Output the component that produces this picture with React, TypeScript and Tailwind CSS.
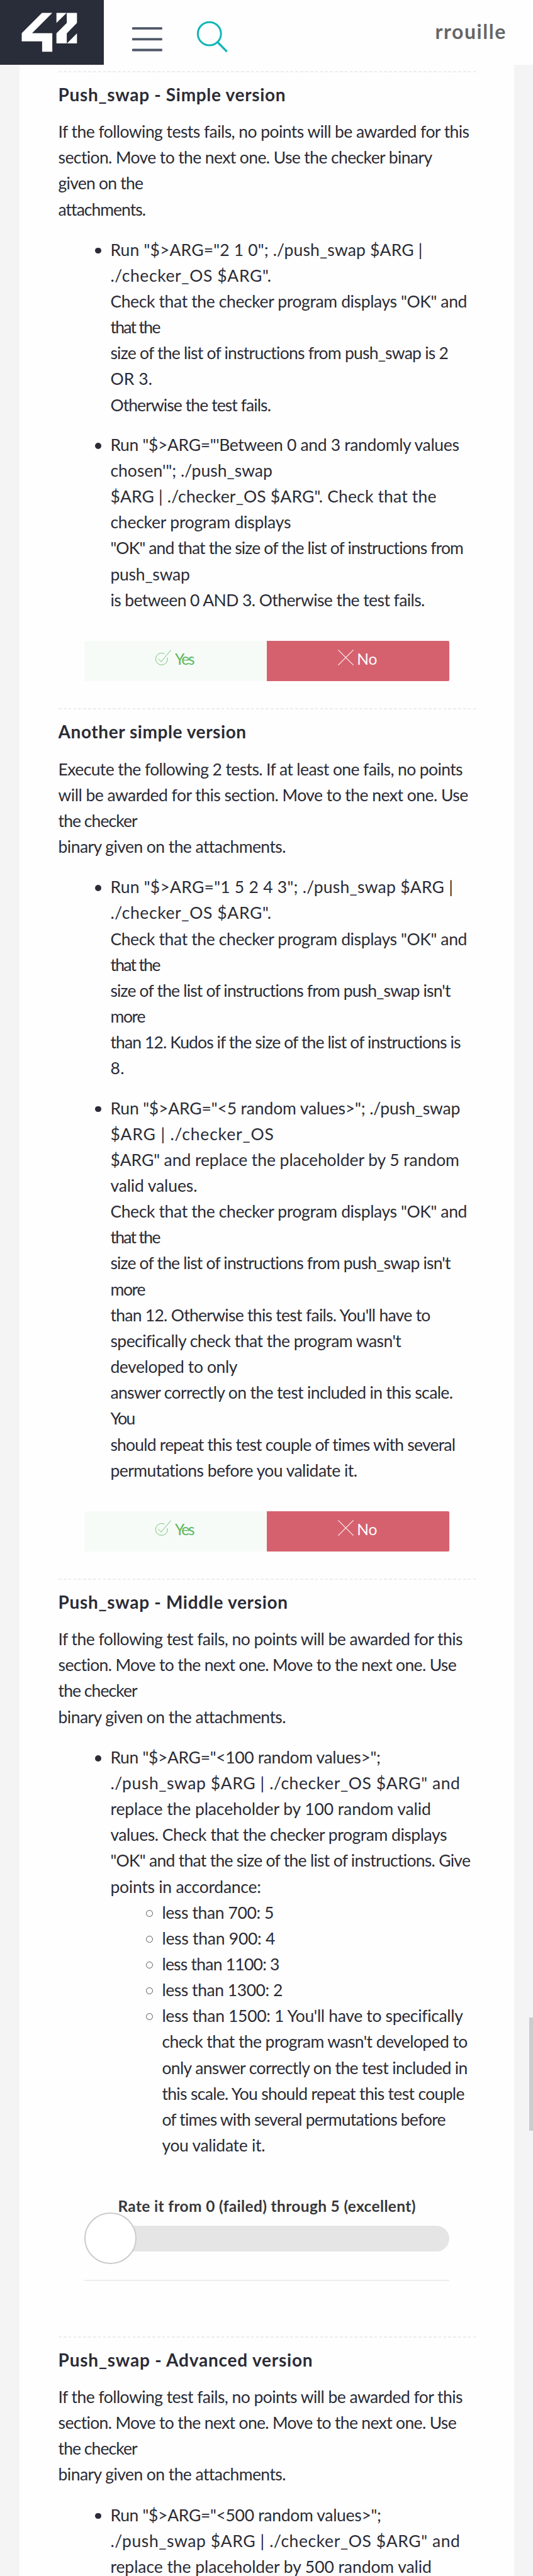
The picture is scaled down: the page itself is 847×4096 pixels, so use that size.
import { useLayoutEffect, useRef, useState } from "react";

type Row = [text: string, width: number];

/** One line of copy, tracked so that it spans the given measure. */
function Line({ row, className = "" }: { row: Row; className?: string }) {
  const [text, width] = row;
  const ref = useRef<HTMLSpanElement>(null);
  const [spacing, setSpacing] = useState(0);
  useLayoutEffect(() => {
    const el = ref.current;
    if (!el) return;
    el.style.letterSpacing = "0px";
    const natural = el.getBoundingClientRect().width;
    const next = (width - natural) / Math.max(text.length - 1, 1);
    el.style.letterSpacing = `${next}px`;
    setSpacing(next);
  }, [text, width]);
  return (
    <span className={`block whitespace-nowrap ${className}`}>
      <span ref={ref} style={{ letterSpacing: `${spacing}px` }}>
        {text}
      </span>
    </span>
  );
}

function Lines({ rows }: { rows: Row[] }) {
  return (
    <>
      {rows.map((row, i) => (
        <Line key={i} row={row} />
      ))}
    </>
  );
}

function Item({ rows, children }: { rows: Row[]; children?: React.ReactNode }) {
  return (
    <li className="flex">
      <span className="mt-[17px] mr-[14.5px] ml-[58.5px] size-[9.8px] shrink-0 rounded-full bg-[#2b2c36]" />
      <div>
        <Lines rows={rows} />
        {children}
      </div>
    </li>
  );
}

function SubItem({ rows }: { rows: Row[] }) {
  return (
    <li className="flex">
      <span className="mt-[16px] mr-[14px] ml-[57px] size-[11px] shrink-0 rounded-full border border-[#55565e]" />
      <div>
        <Lines rows={rows} />
      </div>
    </li>
  );
}

function Answer() {
  return (
    <div className="mt-[44px] ml-[41.5px] flex h-[64.3px] w-[580px] text-[24.5px] leading-[30px]">
      <div className="flex flex-1 bg-[#f6fbf8] pt-[13px] pl-[113px] text-[#5cb85c]">
        <svg viewBox="0 0 32 32" className="mt-[1px] mr-[6px] h-[25px] w-[25px]" fill="none" stroke="currentColor" strokeWidth="1.1">
          <path d="M18.5 8.6A12 12 0 1 0 24.3 16.5" />
          <path d="M5.5 18.2L11.8 24.4L31.6 .6" />
        </svg>
        <Line row={["Yes", 31.5]} className="mt-[1px]" />
      </div>
      <div className="flex flex-1 rounded-r-[2px] bg-[#d6616e] pt-[13px] pl-[113.5px] text-white">
        <svg viewBox="0 0 32 32" className="mt-[1px] mr-[5px] h-[25px] w-[25px]" fill="none" stroke="currentColor" strokeWidth="1.3">
          <path d="M.5 .5L31.5 31.5M31.5 .5L.5 31.5" />
        </svg>
        <Line row={["No", 32]} className="mt-[1px]" />
      </div>
    </div>
  );
}

function Slider() {
  return (
    <div className="mt-[61px] ml-[41.5px] w-[580px]">
      <div className="flex justify-center text-[24.5px] leading-[30px] font-bold text-[#37373a]">
        <Line row={["Rate it from 0 (failed) through 5 (excellent)", 473]} />
      </div>
      <div className="relative mt-[15.3px] h-[41px] rounded-full bg-[#e5e5e5]">
        <div className="absolute top-[-21px] left-0 size-[82.5px] rounded-full border-2 border-[#cccccc] bg-white" />
      </div>
      <div className="mt-[45.5px] h-[2px] bg-[#eeeeee]" />
    </div>
  );
}

function Section({ title, intro, height, children }: { title: Row; intro: Row[]; height: string; children: React.ReactNode }) {
  return (
    <section className={`${height} shrink-0 overflow-hidden`}>
      <div className="h-[2px] bg-[repeating-linear-gradient(90deg,#ececec_0px,#ececec_4.7px,#fefefe_4.7px,#fefefe_7.84px)]" />
      <h4 className="pt-[15px] text-[28px] font-bold">
        <Line row={title} />
      </h4>
      <div className="pt-[18px]">
        <Lines rows={intro} />
      </div>
      <ul className="flex flex-col gap-[22px] pt-[23px]">{children}</ul>
    </section>
  );
}

const checkerIntro: Row[] = [
  ["If the following test fails, no points will be awarded for this", 643],
  ["section. Move to the next one. Move to the next one. Use", 633.5],
  ["the checker", 126],
  ["binary given on the attachments.", 361],
];

function Header() {
  return (
    <header className="flex h-[102.7px] bg-[#fefefe]">
      <div className="w-[164.7px] bg-[#292d39]">
        <svg viewBox="0 0 630 393" className="block h-[102.7px] w-[164.7px]" fill="#fff">
          <path d="M255 78H318L195 202H318V315H256V252H132V202Z" />
          <path d="M343 78H405L343 140Z" />
          <path d="M406 78H468V140L406 203V264H343V203L406 140Z" />
          <path d="M468 203V264H407Z" />
        </svg>
      </div>
      <svg viewBox="804 165 183 148" className="mt-[43.1px] ml-[45.4px] h-[38.7px] w-[47.8px]" fill="#4f5767">
        <rect x="804" y="166" width="183" height="14.5" rx="2" />
        <rect x="804" y="231.5" width="183" height="14.5" rx="2" />
        <rect x="804" y="297.5" width="183" height="14.5" rx="2" />
      </svg>
      <svg viewBox="1196 126 192 194" className="mt-[33px] ml-[54.6px] h-[50.7px] w-[50.2px]" fill="none" stroke="#12b6b7">
        <circle cx="1275.5" cy="205" r="70.5" strokeWidth="11.5" />
        <path d="M1327 258L1382 314" strokeWidth="13" />
      </svg>
      <div className="mt-[29.5px] mr-[42px] ml-auto text-[32px] leading-[40px] font-bold text-[#666666]">
        <Line row={["rrouille", 112]} />
      </div>
    </header>
  );
}

export default function App() {
  return (
    <div className="relative h-[4096px] w-[847px] overflow-hidden bg-[#f4f4f4] font-[Lato,sans-serif] text-[26.5px] leading-[41.16px] text-[#2b2c36]">
      <Header />
      <main className="ml-[30.6px] flex h-[3993.3px] w-[786.8px] flex-col overflow-hidden bg-[#fefefe] pt-[10.2px] pr-[61.7px] pl-[62px]">
        <Section
          height="h-[1013.6px]"
          title={["Push_swap - Simple version", 361]}
          intro={[
            ["If the following tests fails, no points will be awarded for this", 653.5],
            ["section. Move to the next one. Use the checker binary", 595],
            ["given on the", 135.5],
            ["attachments.", 138.5],
          ]}
        >
          <Item
            rows={[
              ['Run "$>ARG="2 1 0"; ./push_swap $ARG |', 496],
              ['./checker_OS $ARG".', 255.5],
              ['Check that the checker program displays "OK" and', 567],
              ["that the", 80],
              ["size of the list of instructions from push_swap is 2", 538],
              ["OR 3.", 66.5],
              ["Otherwise the test fails.", 255.5],
            ]}
          />
          <Item
            rows={[
              ["Run \"$>ARG=\"'Between 0 and 3 randomly values", 554.5],
              ["chosen'\"; ./push_swap", 257.5],
              ['$ARG | ./checker_OS $ARG". Check that the', 518],
              ["checker program displays", 287],
              ['"OK" and that the size of the list of instructions from', 562],
              ["push_swap", 126.5],
              ["is between 0 AND 3. Otherwise the test fails.", 500],
            ]}
          />
          <li className="mt-[-22px]">
            <Answer />
          </li>
        </Section>
        <Section
          height="h-[1383.5px]"
          title={["Another simple version", 298.5]}
          intro={[
            ["Execute the following 2 tests. If at least one fails, no points", 643],
            ["will be awarded for this section. Move to the next one. Use", 652],
            ["the checker", 126],
            ["binary given on the attachments.", 361],
          ]}
        >
          <Item
            rows={[
              ['Run "$>ARG="1 5 2 4 3"; ./push_swap $ARG |', 544.5],
              ['./checker_OS $ARG".', 255.5],
              ['Check that the checker program displays "OK" and', 567],
              ["that the", 80],
              ["size of the list of instructions from push_swap isn't", 541.5],
              ["more", 56],
              ["than 12. Kudos if the size of the list of instructions is", 557.5],
              ["8.", 22],
            ]}
          />
          <Item
            rows={[
              ['Run "$>ARG="<5 random values>"; ./push_swap', 556],
              ["$ARG | ./checker_OS", 259.5],
              ['$ARG" and replace the placeholder by 5 random', 554.5],
              ["valid values.", 138],
              ['Check that the checker program displays "OK" and', 567],
              ["that the", 80],
              ["size of the list of instructions from push_swap isn't", 541.5],
              ["more", 56],
              ["than 12. Otherwise this test fails. You'll have to", 509],
              ["specifically check that the program wasn't", 462],
              ["developed to only", 202],
              ["answer correctly on the test included in this scale.", 544.5],
              ["You", 40],
              ["should repeat this test couple of times with several", 549],
              ["permutations before you validate it.", 393],
            ]}
          />
          <li className="mt-[-22px]">
            <Answer />
          </li>
        </Section>
        <Section height="h-[1204.9px]" title={["Push_swap - Middle version", 364.5]} intro={checkerIntro}>
          <Item
            rows={[
              ['Run "$>ARG="<100 random values>";', 429.5],
              ['./push_swap $ARG | ./checker_OS $ARG" and', 555.5],
              ["replace the placeholder by 100 random valid", 509.5],
              ["values. Check that the checker program displays", 535],
              ['"OK" and that the size of the list of instructions. Give', 573],
              ["points in accordance:", 239.5],
            ]}
          >
            <ul>
              <SubItem rows={[["less than 700: 5", 178]]} />
              <SubItem rows={[["less than 900: 4", 180]]} />
              <SubItem rows={[["less than 1100: 3", 187]]} />
              <SubItem rows={[["less than 1300: 2", 192]]} />
              <SubItem
                rows={[
                  ["less than 1500: 1 You'll have to specifically", 478],
                  ["check that the program wasn't developed to", 486],
                  ["only answer correctly on the test included in", 486],
                  ["this scale. You should repeat this test couple", 481],
                  ["of times with several permutations before", 452],
                  ["you validate it.", 164],
                ]}
              />
            </ul>
          </Item>
          <li className="mt-[-22px]">
            <Slider />
          </li>
        </Section>
        <Section height="h-[381px]" title={["Push_swap - Advanced version", 404]} intro={checkerIntro}>
          <Item
            rows={[
              ['Run "$>ARG="<500 random values>";', 430.5],
              ['./push_swap $ARG | ./checker_OS $ARG" and', 555.5],
              ["replace the placeholder by 500 random valid", 510.5],
            ]}
          />
        </Section>
      </main>
      <div className="absolute top-[3208px] right-0 h-[180px] w-[6.5px] bg-[#cccccc]" />
    </div>
  );
}
